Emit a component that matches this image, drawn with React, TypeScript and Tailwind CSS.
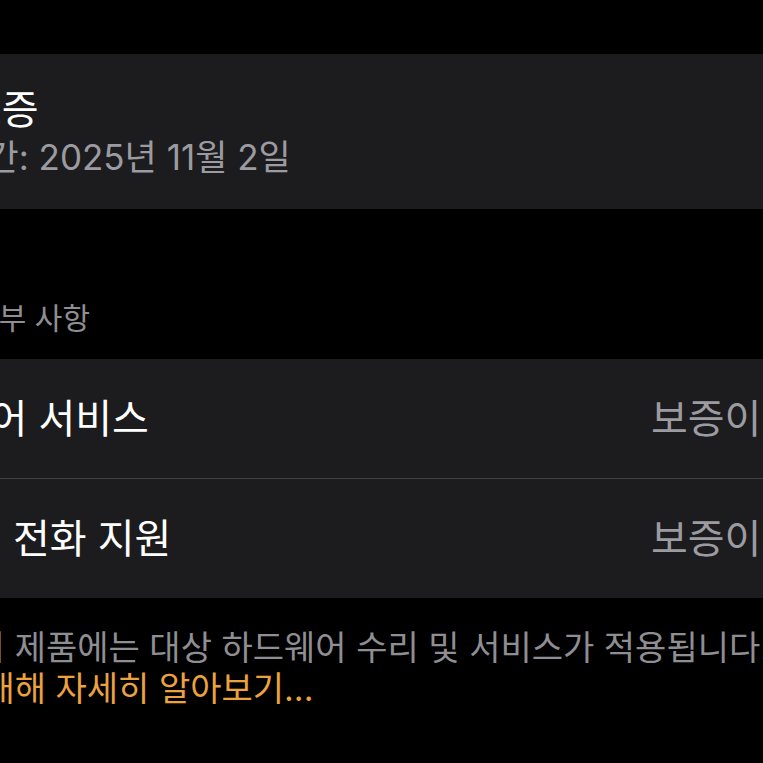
import React from "react";

const font = { fontFamily: "Inter, 'Noto Sans CJK KR', sans-serif" };

export default function App() {
  return (
    <div className="w-[763px] h-[763px] overflow-hidden bg-black" style={font}>
      <div className="ml-[-160px] w-[1083px] pt-[54px]">
        {/* Card 1 */}
        <div className="h-[155px] bg-[#1c1c1e] rounded-[22px] px-[40px] pt-[33px] flex flex-col">
          <div className="text-[40px] leading-[46px] text-white whitespace-nowrap">제한 보증</div>
          <div className="mt-[3px] text-[35px] leading-[42px] text-[#9b9ba1] whitespace-nowrap">
            보증 기간: 2025년 11월 2일
          </div>
        </div>

        {/* Section header */}
        <div className="mt-[89px] px-[40px] text-[30px] leading-[40px] text-[#8e8e93] whitespace-nowrap">
          서비스 세부 사항
        </div>

        {/* Card 2 */}
        <div className="mt-[21px] bg-[#1c1c1e] rounded-[22px] flex flex-col">
          <div className="h-[119px] px-[40px] flex items-center justify-between">
            <span className="text-[40px] text-white whitespace-nowrap">하드웨어 서비스</span>
            <span className="text-[40px] text-[#9b9ba1] whitespace-nowrap">보증이 적용됨</span>
          </div>
          <div className="ml-[40px] h-px bg-[#424245]" />
          <div className="h-[119px] px-[40px] flex items-center justify-between">
            <span className="text-[40px] text-white whitespace-nowrap">기술 및 전화 지원</span>
            <span className="text-[40px] text-[#9b9ba1] whitespace-nowrap">보증이 적용됨</span>
          </div>
        </div>

        {/* Footer */}
        <div className="mt-[29px] px-[40px] text-[34px] leading-[41px] whitespace-nowrap">
          <div className="text-[#8e8e93]">고객님의 제품에는 대상 하드웨어 수리 및 서비스가 적용됩니다.</div>
          <div className="text-[#eba23f]">보증에 대해 자세히 알아보기...</div>
        </div>
      </div>
    </div>
  );
}
